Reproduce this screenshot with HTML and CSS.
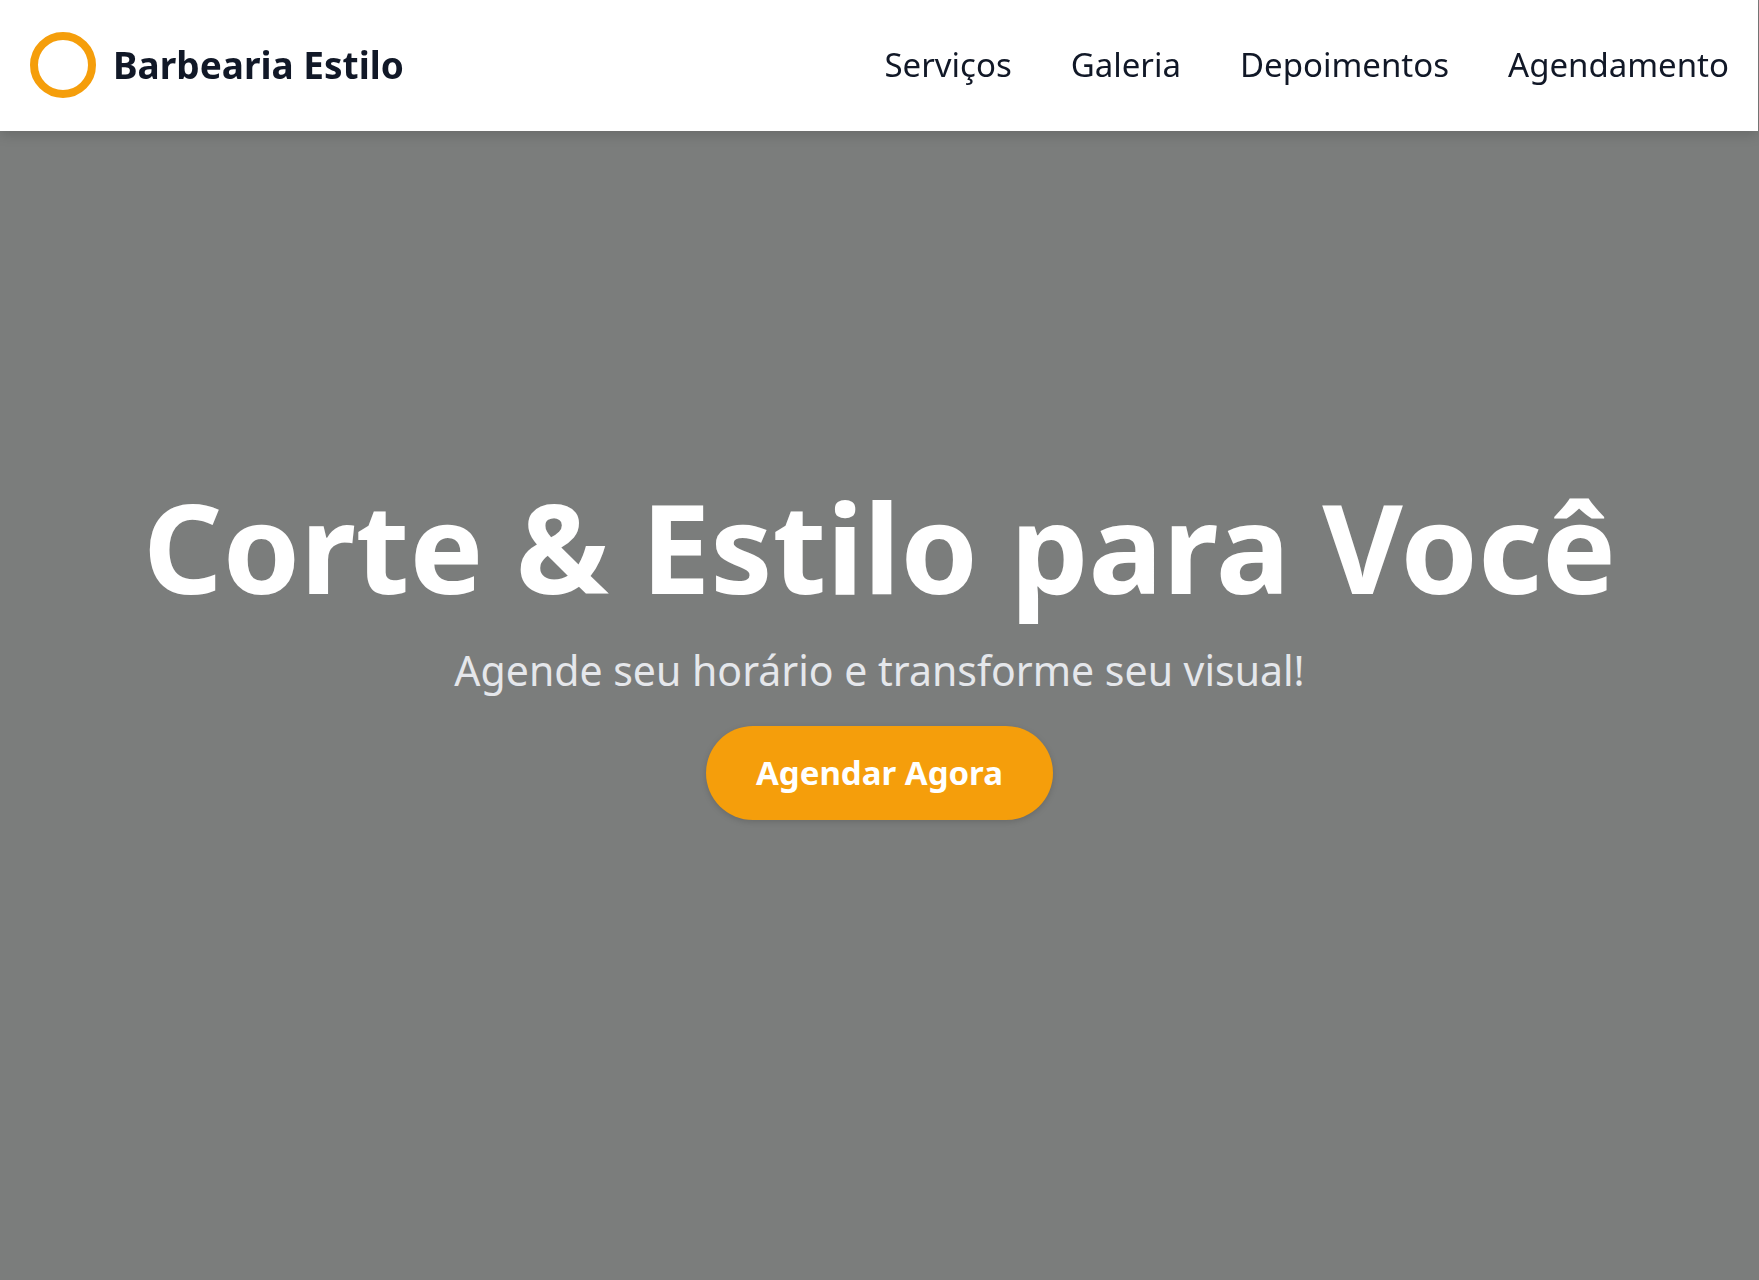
FILE: index.html
```html
<!DOCTYPE html>
<html lang="pt-BR">
<head>
  <meta charset="UTF-8">
  <meta name="viewport" content="width=device-width, initial-scale=1.0">
  <title>Barbearia Estilo</title>
  <link rel="stylesheet" href="styles.css">
</head>
<body>

  <!-- Header -->
  <header class="header">
    <a href="#inicio" class="logo">
      <svg class="logo-icon" viewBox="0 0 66 66" aria-hidden="true">
        <circle cx="33" cy="33" r="29" fill="none" stroke="#f59e0b" stroke-width="8"/>
      </svg>
      <span>Barbearia Estilo</span>
    </a>
    <nav class="nav">
      <a href="#servicos">Serviços</a>
      <a href="#galeria">Galeria</a>
      <a href="#depoimentos">Depoimentos</a>
      <a href="#agendamento">Agendamento</a>
    </nav>
  </header>

  <!-- Hero -->
  <section id="inicio" class="hero">
    <h1>Corte &amp; Estilo para Você</h1>
    <p>Agende seu horário e transforme seu visual!</p>
    <button type="button" class="btn">Agendar Agora</button>
  </section>

</body>
</html>
```
FILE: styles.css
```css
* {
  box-sizing: border-box;
  margin: 0;
  padding: 0;
}

body {
  font-family: "Noto Sans", sans-serif;
  background-color: #7b7d7c;
  color: #111827;
}

/* Header */
.header {
  position: fixed;
  top: 0;
  left: 0;
  right: 1px;
  z-index: 10;
  display: flex;
  flex-wrap: wrap;
  justify-content: space-between;
  align-items: center;
  padding: 32px 29px 33px 30px;
  background-color: #fff;
  box-shadow: 0 4px 12px rgba(0, 0, 0, 0.15);
}

.logo {
  display: flex;
  align-items: center;
  gap: 17px;
  color: #111827;
  font-size: 37px;
  line-height: 50px;
  font-weight: 700;
  text-decoration: none;
}

.logo-icon {
  width: 66px;
  height: 66px;
}

.nav {
  display: flex;
  flex-wrap: wrap;
  gap: 59px;
}

.nav a {
  color: #111827;
  font-size: 33px;
  line-height: 52px;
  text-decoration: none;
}

/* Hero */
.hero {
  display: flex;
  flex-direction: column;
  justify-content: center;
  align-items: center;
  min-height: 100vh;
  padding: 54px 32px 32px;
  text-align: center;
}

.hero h1 {
  margin-bottom: 30px;
  color: #fff;
  font-size: 124px;
  line-height: 125px;
  font-weight: 700;
}

.hero p {
  margin-bottom: 24px;
  color: #e5e7eb;
  font-size: 41px;
  line-height: 64px;
}

.btn {
  padding: 22px 50px;
  border: none;
  border-radius: 50px;
  background-color: #f59e0b;
  color: #fff;
  font-family: inherit;
  font-size: 33px;
  line-height: 50px;
  font-weight: 700;
  cursor: pointer;
  box-shadow: 0 2px 6px rgba(0, 0, 0, 0.15);
}

.btn:hover {
  background-color: #d97706;
}
```
